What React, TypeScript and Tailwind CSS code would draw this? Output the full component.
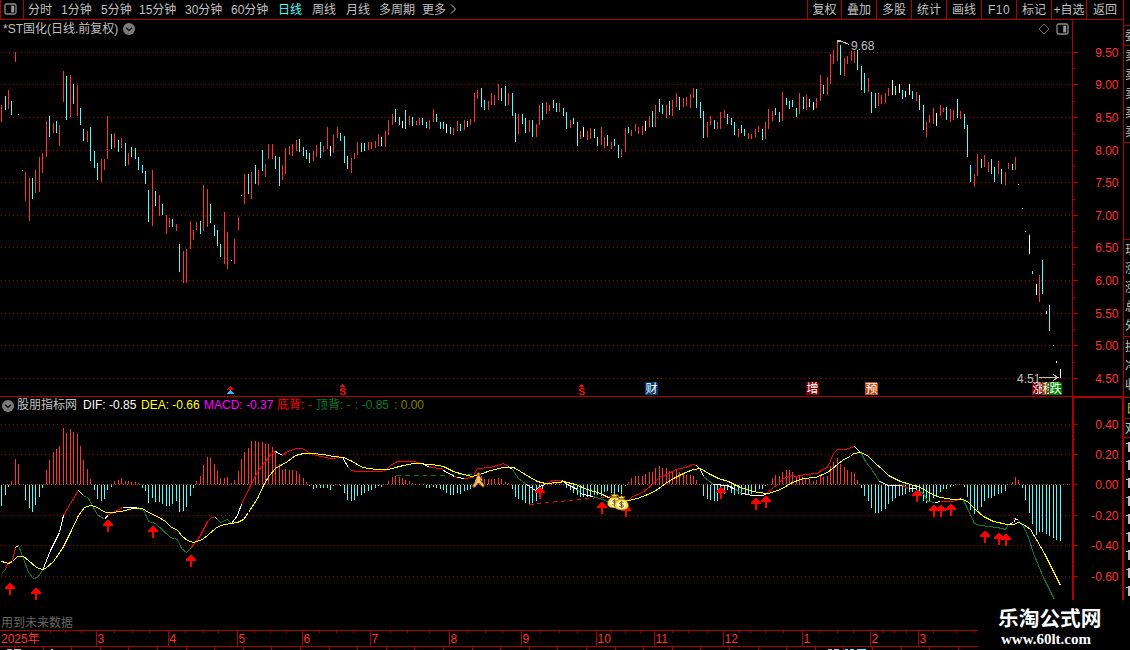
import { ReactNode } from "react";

type Bar = [x: number, top: number, bottom: number];
type Segment = [color: string, points: string];

const RED = "#ff3232";
const CYAN = "#54fcfc";
const WHITE = "#ffffff";
const GREEN = "#0a7a28";
const FRAME = "#b00000";

const periods = [
    { label: "分时", width: "w-[33px]" },
    { label: "1分钟", width: "w-[40px]" },
    { label: "5分钟", width: "w-[38px]" },
    { label: "15分钟", width: "w-[46px]" },
    { label: "30分钟", width: "w-[46px]" },
    { label: "60分钟", width: "w-[47px]" },
    { label: "日线", width: "w-[34px]", active: true },
    { label: "周线", width: "w-[34px]" },
    { label: "月线", width: "w-[33px]" },
    { label: "多周期", width: "w-[43px]" },
    { label: "更多", width: "w-[27px]" },
];

const tools = [
    { label: "复权", style: "w-[34px]" },
    { label: "叠加", style: "w-[35px]" },
    { label: "多股", style: "w-[35px]" },
    { label: "统计", style: "w-[35px]" },
    { label: "画线", style: "w-[35px]" },
    { label: "F10", style: "w-[35px] tracking-[0.5px]" },
    { label: "标记", style: "w-[35px]" },
    { label: "+自选", style: "w-[35px]" },
    { label: "返回", style: "w-[37px]" },
];

const upBars: Bar[] = [
    [1, 105, 122], [8, 90, 109], [15, 52, 62], [25, 172, 201], [29, 178, 221], [35, 170, 193], [39, 157, 192],
    [42, 153, 173], [46, 121, 157], [53, 123, 133], [59, 125, 146], [63, 71, 102], [70, 75, 117], [77, 85, 116],
    [87, 131, 142], [101, 159, 182], [104, 159, 170], [107, 116, 159], [114, 133, 148], [121, 138, 148],
    [128, 153, 165], [152, 170, 226], [159, 195, 216], [166, 215, 234], [169, 218, 227], [176, 224, 231],
    [183, 251, 283], [186, 249, 283], [190, 221, 249], [193, 230, 240], [196, 222, 230], [203, 185, 231],
    [207, 189, 227], [224, 212, 264], [227, 232, 269], [234, 239, 264], [238, 217, 230], [244, 174, 204],
    [251, 172, 199], [258, 170, 185], [265, 164, 177], [268, 144, 159], [272, 144, 159], [282, 165, 180],
    [285, 148, 174], [289, 146, 155], [292, 144, 156], [296, 140, 151], [313, 151, 161], [316, 145, 157],
    [323, 146, 152], [327, 127, 149], [333, 135, 153], [337, 127, 138], [351, 158, 173], [354, 153, 159],
    [357, 142, 155], [368, 142, 150], [371, 142, 149], [375, 141, 148], [378, 134, 146], [385, 131, 147],
    [388, 120, 135], [392, 114, 125], [409, 116, 125], [416, 121, 125], [419, 118, 125], [429, 120, 129],
    [433, 109, 122], [453, 128, 135], [457, 121, 131], [464, 120, 130], [470, 119, 125], [474, 93, 122],
    [477, 90, 99], [488, 101, 110], [491, 93, 105], [494, 95, 105], [498, 84, 100], [508, 93, 105],
    [518, 114, 134], [529, 120, 132], [536, 124, 137], [539, 105, 125], [546, 102, 114], [549, 105, 111],
    [559, 103, 112], [570, 120, 128], [580, 131, 139], [587, 131, 140], [590, 128, 139], [601, 127, 145],
    [604, 137, 148], [611, 142, 149], [621, 149, 157], [625, 128, 152], [631, 130, 136], [635, 124, 131],
    [638, 127, 134], [642, 126, 135], [649, 116, 127], [655, 105, 127], [666, 105, 118], [672, 100, 116],
    [676, 93, 107], [683, 98, 107], [686, 97, 106], [690, 94, 108], [693, 88, 98], [707, 122, 137],
    [710, 116, 125], [717, 122, 129], [720, 112, 129], [724, 110, 118], [738, 129, 137], [748, 133, 139],
    [751, 134, 139], [755, 129, 137], [758, 126, 132], [765, 122, 139], [768, 109, 129], [772, 111, 121],
    [782, 92, 121], [799, 93, 114], [806, 95, 110], [816, 98, 108], [820, 75, 101], [827, 77, 95],
    [830, 54, 84], [833, 50, 64], [837, 42, 61], [844, 58, 76], [847, 56, 64], [851, 51, 61], [854, 51, 63],
    [868, 78, 92], [878, 93, 106], [881, 95, 104], [885, 93, 103], [888, 88, 96], [916, 92, 101],
    [926, 122, 137], [929, 115, 123], [933, 108, 124], [940, 105, 116], [943, 108, 112], [950, 109, 122],
    [953, 110, 120], [960, 111, 119], [974, 174, 187], [977, 154, 176], [984, 155, 167], [988, 162, 172],
    [998, 161, 174], [1005, 172, 185], [1008, 163, 169], [1015, 157, 170], [1039, 275, 302],
];

const downBars: Bar[] = [
    [5, 96, 110], [11, 101, 115], [32, 178, 199], [49, 116, 137], [56, 121, 133], [66, 76, 120], [73, 84, 104],
    [80, 108, 125], [83, 129, 141], [90, 127, 161], [94, 151, 168], [97, 163, 180], [111, 134, 149],
    [118, 140, 152], [125, 143, 166], [131, 147, 157], [135, 148, 159], [138, 157, 170], [142, 165, 173],
    [145, 171, 184], [148, 190, 222], [155, 191, 206], [162, 204, 215], [172, 219, 227], [179, 244, 272],
    [200, 221, 234], [210, 204, 223], [214, 225, 236], [217, 230, 246], [220, 244, 257], [248, 174, 194],
    [255, 165, 184], [262, 150, 171], [275, 156, 169], [279, 157, 186], [299, 139, 152], [303, 147, 156],
    [306, 150, 159], [309, 153, 163], [320, 142, 158], [340, 133, 141], [344, 136, 163], [347, 156, 169],
    [361, 143, 152], [364, 143, 151], [381, 137, 146], [395, 109, 122], [399, 117, 125], [405, 110, 129],
    [412, 117, 126], [422, 118, 125], [426, 122, 128], [436, 114, 122], [440, 122, 129], [443, 122, 129],
    [450, 127, 134], [460, 124, 131], [467, 121, 127], [481, 88, 107], [484, 100, 110], [501, 88, 101],
    [505, 86, 106], [512, 93, 116], [515, 113, 142], [522, 114, 124], [525, 118, 133], [532, 120, 137],
    [542, 103, 120], [553, 100, 108], [556, 103, 112], [563, 108, 116], [566, 112, 129], [573, 118, 124],
    [577, 122, 146], [594, 129, 138], [597, 137, 146], [607, 135, 146], [614, 139, 146], [618, 145, 158],
    [628, 127, 133], [652, 111, 127], [659, 99, 112], [662, 105, 114], [669, 101, 115], [679, 97, 110],
    [696, 89, 108], [700, 102, 118], [703, 111, 138], [714, 120, 129], [727, 114, 124], [731, 118, 125],
    [734, 122, 135], [741, 125, 133], [744, 129, 136], [762, 129, 140], [775, 108, 115], [779, 112, 122],
    [786, 98, 105], [789, 101, 109], [792, 100, 107], [796, 108, 117], [803, 97, 109], [809, 99, 107],
    [823, 85, 94], [840, 45, 75], [857, 50, 70], [861, 66, 90], [864, 73, 93], [871, 92, 113], [875, 93, 108],
    [895, 86, 95], [902, 90, 99], [912, 91, 99], [919, 95, 110], [923, 105, 130], [946, 107, 120],
    [957, 99, 118], [964, 114, 129], [967, 125, 157], [970, 165, 182], [981, 159, 168], [991, 159, 174],
    [994, 167, 182], [1001, 169, 184], [1012, 164, 170], [1032, 271, 274], [1042, 260, 294], [1049, 305, 331],
];

const flatBars: Bar[] = [
    [18, 114, 115], [22, 170, 171], [231, 260, 261], [241, 195, 196], [330, 146, 156], [402, 121, 128],
    [446, 124, 133], [583, 127, 137], [645, 121, 131], [813, 102, 110], [892, 80, 95], [899, 84, 93],
    [905, 91, 97], [909, 84, 95], [936, 113, 126], [1018, 184, 185], [1022, 208, 209], [1025, 231, 232],
    [1029, 235, 254], [1036, 284, 295], [1046, 311, 314], [1053, 345, 346], [1056, 361, 363], [1060, 369, 378],
];

// [x, end of bar], the zero line sits at 484
const macd: [number, number][] = [
    [1, 506], [5, 495], [8, 487], [11, 481], [15, 459], [18, 464], [25, 500], [29, 508], [32, 512], [35, 505],
    [39, 497], [42, 488], [46, 470], [49, 460], [53, 452], [56, 449], [59, 446], [63, 428], [66, 433], [70, 429],
    [73, 432], [77, 434], [80, 446], [83, 460], [87, 469], [90, 479], [94, 490], [97, 499], [101, 501],
    [104, 499], [107, 490], [111, 487], [114, 481], [118, 480], [121, 478], [125, 481], [128, 481], [131, 482],
    [135, 482], [138, 483], [142, 488], [145, 491], [148, 503], [152, 498], [155, 502], [159, 502], [162, 504],
    [166, 506], [169, 506], [172, 504], [176, 501], [179, 512], [183, 511], [186, 507], [190, 496], [193, 488],
    [196, 481], [200, 476], [203, 465], [207, 457], [210, 458], [214, 464], [217, 471], [220, 478], [224, 478],
    [227, 477], [231, 483], [234, 480], [238, 471], [241, 459], [244, 452], [248, 448], [251, 441], [255, 441],
    [258, 442], [262, 442], [265, 444], [268, 444], [272, 447], [275, 453], [279, 464], [282, 470], [285, 469],
    [289, 470], [292, 470], [296, 471], [299, 474], [303, 478], [306, 482], [309, 486], [313, 489], [316, 488],
    [320, 488], [323, 488], [327, 488], [330, 490], [333, 486], [340, 486], [344, 493], [347, 500], [351, 501],
    [354, 500], [357, 496], [361, 495], [364, 493], [368, 491], [371, 490], [375, 488], [378, 486], [381, 487],
    [388, 481], [392, 477], [395, 476], [399, 477], [402, 478], [405, 480], [409, 481], [412, 483], [426, 488],
    [429, 488], [433, 487], [436, 488], [440, 489], [443, 490], [446, 493], [450, 495], [453, 495], [457, 493],
    [460, 494], [464, 491], [467, 490], [470, 489], [481, 476], [484, 479], [488, 479], [491, 479], [494, 479],
    [498, 478], [501, 479], [505, 482], [508, 483], [512, 489], [515, 497], [518, 499], [522, 500], [525, 503],
    [529, 504], [532, 503], [536, 501], [539, 498], [542, 490], [546, 483], [549, 483], [553, 483], [556, 483],
    [566, 488], [570, 490], [573, 493], [577, 495], [580, 497], [583, 497], [587, 497], [590, 496], [594, 495],
    [597, 495], [601, 496], [604, 492], [607, 491], [611, 493], [614, 494], [618, 492], [621, 494], [625, 486],
    [628, 482], [631, 478], [635, 476], [638, 476], [642, 476], [645, 474], [649, 472], [652, 472], [655, 468],
    [659, 466], [662, 468], [666, 468], [669, 471], [672, 471], [676, 470], [679, 472], [683, 473], [686, 475],
    [690, 475], [693, 476], [696, 480], [703, 496], [707, 499], [710, 500], [714, 501], [717, 501], [720, 495],
    [724, 494], [727, 490], [731, 493], [734, 495], [738, 494], [741, 495], [745, 495], [748, 494], [751, 494],
    [755, 492], [759, 489], [762, 489], [765, 486], [772, 478], [775, 475], [779, 476], [782, 472], [786, 470],
    [789, 470], [792, 472], [796, 476], [799, 475], [802, 477], [805, 479], [809, 479], [813, 481], [816, 480],
    [820, 476], [823, 477], [827, 476], [830, 466], [833, 462], [837, 458], [840, 464], [844, 467], [847, 470],
    [851, 472], [854, 473], [857, 480], [861, 488], [864, 496], [868, 501], [871, 508], [875, 513], [878, 513],
    [881, 511], [885, 509], [888, 504], [892, 501], [895, 498], [899, 496], [902, 495], [905, 494], [909, 492],
    [912, 492], [916, 489], [919, 491], [923, 501], [926, 503], [929, 502], [933, 498], [936, 497], [940, 492],
    [943, 489], [946, 489], [950, 487], [953, 486], [964, 487], [967, 497], [970, 510], [974, 514], [977, 510],
    [981, 507], [984, 501], [988, 498], [991, 498], [994, 496], [998, 494], [1001, 493], [1005, 491], [1012, 482],
    [1015, 477], [1018, 480], [1022, 488], [1025, 500], [1029, 513], [1032, 524], [1036, 535], [1039, 532],
    [1042, 532], [1046, 534], [1049, 536], [1053, 538], [1056, 540], [1060, 541],
];

const dea =
    "1,561 5,562 8,563 12,561 17,556 23,556 28,560 36,567 42,569 45,568 53,561 62,548 71,530 78,515 84,507 90,505 95,506 100,509 105,512 112,512 120,511 133,508 142,508 148,512 157,516 165,521 170,526 177,530 182,536 187,540 193,542 202,539 208,534 215,528 220,525 230,523 237,522 243,519 248,512 257,498 263,485 269,475 275,468 282,464 287,461 295,455 303,453 312,453 323,454 333,456 343,457 352,461 360,466 367,468 377,469 388,469 395,467 403,465 413,463 432,464 443,466 453,471 463,474 472,476 482,473 490,470 503,467 513,467 520,471 528,476 537,481 545,483 559,482 563,481 575,484 587,489 600,493 608,497 620,501 628,500 637,498 650,493 657,489 665,483 675,477 685,472 693,469 700,468 708,473 718,478 728,481 740,487 750,490 757,492 768,493 780,489 792,482 803,478 815,477 827,472 837,464 843,459 850,456 853,453 860,452 867,455 875,463 882,469 888,475 900,481 910,484 920,487 930,493 940,497 953,499 963,499 968,502 975,509 983,516 993,521 1007,524 1013,524 1018,522 1023,524 1030,529 1036,539 1045,555 1053,571 1060,585";

const dif: Segment[] = [
    [GREEN, "1,573 5,569"],
    ["#ff0000", "5,569 7,563 12,560 15,547"],
    [WHITE, "15,547 18,545"],
    [GREEN, "18,545 23,558 28,572 33,578 37,577 42,570"],
    [WHITE, "42,570 50,550 59,532 63,515"],
    ["#ff0000", "63,515 70,503 78,490"],
    [WHITE, "78,490 83,495"],
    [GREEN, "83,495 88,498 93,507 97,514 104,519"],
    [WHITE, "104,519 108,514"],
    ["#ff0000", "108,514 115,511 122,507"],
    [WHITE, "122,507 137,507"],
    [GREEN, "137,507 144,511 148,521 155,523 170,537 177,539 181,548 186,552 190,548"],
    ["#ff0000", "190,548 195,542 200,535 207,521 211,517 215,517"],
    [WHITE, "215,517 217,519"],
    [GREEN, "217,519 220,522 227,519 231,523"],
    [WHITE, "231,523 237,515 241,504"],
    ["#ff0000", "241,504 250,485 258,470 271,453 275,451"],
    [WHITE, "275,451 282,455"],
    ["#ff0000", "282,455 287,451 296,448 302,448 312,454 330,458 342,457"],
    [WHITE, "342,457 348,467"],
    [GREEN, "348,467 351,470"],
    ["#ff0000", "351,470 357,471 380,471 385,470 390,465 397,461 413,461 422,463"],
    [WHITE, "422,463 429,467"],
    ["#ff0000", "429,467 441,468 443,470"],
    [WHITE, "443,470 454,476"],
    ["#ff0000", "454,476 457,477"],
    [WHITE, "457,477 464,478"],
    ["#ff0000", "464,478 472,477 477,468 490,467 503,463 508,466"],
    [WHITE, "508,466 512,469"],
    [GREEN, "512,469 518,478 526,484"],
    [WHITE, "526,484 535,490 539,486 545,484"],
    ["#ff0000", "545,484 552,480 562,480"],
    [WHITE, "562,480 565,483 577,489"],
    [GREEN, "577,489 580,493"],
    [WHITE, "580,493 587,495 593,496"],
    [GREEN, "593,496 602,499 612,503 620,504"],
    ["#ff0000", "620,504 627,501 632,496 642,492 652,484 660,476 667,474 675,469 685,467 693,464 696,465"],
    [WHITE, "696,465 700,469 703,476"],
    [GREEN, "703,476 713,484"],
    [WHITE, "713,484 727,485 735,489"],
    [GREEN, "735,489 742,493"],
    [WHITE, "742,493 752,495 763,495 766,493"],
    ["#ff0000", "766,493 772,488 778,483 783,478 792,475 795,476 805,474 817,473 822,469 827,467 833,453 837,449 845,449 854,446"],
    [WHITE, "854,446 861,453"],
    [GREEN, "861,453 865,461 870,467 877,478 879,481"],
    [WHITE, "879,481 888,485 902,485"],
    ["#ff0000", "902,485 908,488"],
    [WHITE, "908,488 915,488 917,490"],
    [GREEN, "917,490 923,493 927,501 935,502"],
    [WHITE, "935,502 940,501"],
    ["#ff0000", "940,501 952,501 960,498"],
    [WHITE, "960,498 963,500"],
    [GREEN, "963,500 967,508 974,523 980,525 997,527 1005,529 1008,524"],
    [WHITE, "1008,524 1013,522 1015,519"],
    ["#ff0000", "1012,518 1015,518"],
    [WHITE, "1015,518 1018,520"],
    [GREEN, "1018,520 1023,526 1028,537 1033,553 1043,577 1054,599"],
];

const arrows: [number, number][] = [
    [10, 583], [36, 588], [108, 520], [153, 526], [191, 555], [540, 487], [602, 502], [626, 505], [721, 487],
    [756, 498], [766, 496], [917, 490], [934, 505], [941, 505], [951, 504], [985, 531], [999, 533], [1006, 534],
];

const priceScale: [number, string][] = [
    [52, "9.50"], [84, "9.00"], [117, "8.50"], [150, "8.00"], [182, "7.50"], [215, "7.00"],
    [247, "6.50"], [280, "6.00"], [313, "5.50"], [345, "5.00"], [378, "4.50"],
];

const macdScale: [number, string][] = [
    [424, "0.40"], [454, "0.20"], [484, "0.00"], [515, "-0.20"], [545, "-0.40"], [576, "-0.60"],
];

const badges = [
    { x: 645, label: "财", fill: "#003a70" },
    { x: 806, label: "增", fill: "#800000" },
    { x: 865, label: "预", fill: "#c04a10" },
    { x: 1032, label: "涨", fill: "#800000" },
    { x: 1042, label: "移", fill: "#804000" },
    { x: 1049, label: "跌", fill: "#008000" },
];

const months: [number, string][] = [
    [96, "3"], [168, "4"], [237, "5"], [302, "6"], [370, "7"], [449, "8"], [521, "9"],
    [596, "10"], [654, "11"], [723, "12"], [802, "1"], [870, "2"], [918, "3"],
];

const weekTicks = [
    50, 65, 81, 114, 132, 149, 185, 203, 218, 254, 270, 286, 319, 336, 353, 390, 407, 429, 467, 485, 502, 540, 559,
    577, 611, 625, 640, 672, 688, 707, 739, 750, 765, 783, 819, 837, 853, 883, 894, 906, 933, 956, 974,
];

function PanelIcon() {
    return (
        <svg width="13" height="12" viewBox="0 0 13 12" fill="none">
            <rect x="1" y="1" width="11" height="10" rx="1.5" stroke="#8a8a8a" strokeWidth="1.3" />
            <rect x="7.2" y="2.6" width="3" height="6.8" fill="#9a9a9a" />
        </svg>
    );
}

function ToggleIcon() {
    return (
        <svg width="12" height="12" viewBox="0 0 12 12" fill="none">
            <circle cx="6" cy="6" r="6" fill="#7c7c7c" />
            <path d="M3 4.7 6 7.5 9 4.7" stroke="#151515" strokeWidth="1.5" />
        </svg>
    );
}

function Bars({ data, color }: { data: Bar[]; color: string }) {
    return (
        <g fill={color}>
            {data.map(([x, top, bottom]) => (
                <rect key={x} x={x} y={top} width="1" height={bottom - top} />
            ))}
        </g>
    );
}

function GridLine({ y, from = 1, color = "#b00000" }: { y: number; from?: number; color?: string }) {
    return <line x1={from} x2="1071" y1={y + 0.5} y2={y + 0.5} stroke={color} strokeDasharray="1 3" />;
}

function Scale({ marks }: { marks: [number, string][] }) {
    return (
        <g fill={FRAME}>
            {marks.map(([y, label], i) => (
                <g key={label}>
                    <rect x="1073" y={y} width="5" height="1" />
                    {i < marks.length - 1 && <rect x="1073" y={Math.round((y + marks[i + 1][0]) / 2)} width="2" height="1" />}
                    <text x="1118.5" y={y + 5} textAnchor="end" fill={RED}>{label}</text>
                </g>
            ))}
        </g>
    );
}

function Dividend({ x }: { x: number }) {
    return (
        <g transform={`translate(${x} 384)`} fill="#ff0000">
            <path d="M2 0h1v1h1v1h1v1H0V2h1V1h1z" />
            <path d="M1 4h4v1h1v1H4V5H2v1h1v1h2v1h1v2H5v1H1v-1H0V9h2v1h2V8H2V7H0V5h1z" />
        </g>
    );
}

function MoneyBag({ x, y }: { x: number; y: number }) {
    return (
        <g transform={`translate(${x} ${y})`} shapeRendering="auto">
            <path d="M3 1 5 2 6.500 .5 8 2 10 1 8.800 4C11.500 5 13.500 8 13.500 10.500c0 3-3 4.500-7 4.500S-.5 13.500-.5 10.500c0-2.500 2-5.500 4.700-6.500z" fill="#f4e040" stroke="#8a5020" strokeWidth=".6" />
            <ellipse cx="6.500" cy="9.800" rx="4.600" ry="4.100" fill="#fffab8" />
            <path d="M4 4h5" stroke="#5a3010" />
            <path d="M8.600 7.800c-1-1-4-1-4 .4 0 1.700 4 1 4 2.800 0 1.500-3.200 1.400-4.300.4M6.500 6.300v7" stroke="#8a4c20" strokeWidth="1" fill="none" />
        </g>
    );
}

function Runner() {
    return (
        <g shapeRendering="auto" stroke="#fcc060" strokeLinecap="round" fill="none">
            <path d="m478 481-4 5M479 481l4 4.500M478.500 477v4" stroke="#70401c" strokeWidth="4" />
            <circle cx="478.500" cy="474.300" r="1.700" fill="#e8a048" stroke="#704018" strokeWidth=".7" />
            <path d="M478.500 477.500v4" strokeWidth="3.400" />
            <path d="m478 481-3.700 4.700M479 481l3.800 4.300" strokeWidth="2.200" />
            <path d="m477.500 478-2 3M479.500 478l2.500 2" strokeWidth="1.300" />
        </g>
    );
}

function TopBar() {
    return (
        <header className="flex h-5 shrink-0 border-b border-[#b00000] leading-5">
            <div className="flex w-6 items-center border-x border-[#b00000] pb-0.5 pl-[3px]">
                <PanelIcon />
            </div>
            <nav className="flex flex-1 pl-1">
                {periods.map((p) => (
                    <span key={p.label} className={`${p.width} shrink-0 ${p.active ? "text-[#54fcfc]" : ""}`}>
                        {p.label}
                    </span>
                ))}
                <svg className="mt-1" width="8" height="10" viewBox="0 0 8 10" fill="none" stroke="#c0c0c0">
                    <path d="m2 .500 4.500 4.500L2 9.500" />
                </svg>
            </nav>
            <div className="flex shrink-0">
                {tools.map((t) => (
                    <span key={t.label} className={`${t.style} whitespace-nowrap border-l border-[#b00000] text-center`}>
                        {t.label}
                    </span>
                ))}
            </div>
        </header>
    );
}

function PricePanel() {
    return (
        <section className="flex h-[377px] shrink-0 flex-col border-b border-[#b00000]">
            <div className="flex h-[18px] items-center justify-between pl-[3px] pr-[54px]">
                <div className="flex items-center gap-[5px]">
                    <span className="leading-5">*ST国化(日线.前复权)</span>
                    <ToggleIcon />
                </div>
                <div className="flex items-center gap-[6px]">
                    <svg width="12" height="12" viewBox="0 0 12 12" fill="none" stroke="#707070">
                        <path d="m6 1 5 5-5 5-5-5z" />
                    </svg>
                    <PanelIcon />
                </div>
            </div>
            <svg className="overflow-visible" width="1123" height="358" viewBox="0 38 1123 358" shapeRendering="crispEdges">
                {priceScale.map(([y]) => <GridLine key={y} y={y} />)}
                <Bars data={upBars} color={RED} />
                <Bars data={downBars} color={CYAN} />
                <Bars data={flatBars} color={WHITE} />
                <rect x="1072" y="20" width="1" height="376" fill={FRAME} />
                <Scale marks={priceScale} />

                <g fill="none" stroke="#c0c0c0">
                    <path d="M837.500 43v-3h3M838 41h3l8 3.500" />
                    <path d="M1039 377.500h19M1053 374.500l5 3-5 3" />
                </g>
                <g fill="#c0c0c0">
                    <text x="851" y="50">9.68</text>
                    <text x="1017" y="383">4.51</text>
                </g>

                <path d="M230 386h1v1h1v1h1v1h1v1h-7v-1h1v-1h1v-1h1z" fill="#e00000" />
                <path d="M230 390h1v1h1v1h1v1h1v1h-7v-1h1v-1h1v-1h1z" fill="#30b8f8" />
                <Dividend x={340} />
                <Dividend x={579} />
                {badges.map((b) => (
                    <g key={b.label}>
                        <path d={`M${b.x} 382h11l2 2v11h-13z`} fill={b.fill} />
                        <text x={b.x + 0.5} y="393" fill="#fff">{b.label}</text>
                    </g>
                ))}
            </svg>
        </section>
    );
}

function MacdPanel() {
    return (
        <section className="flex h-[233px] shrink-0 flex-col">
            <div className="flex h-[17px] items-center whitespace-nowrap pl-[2px] leading-[17px]">
                <ToggleIcon />
                <span className="ml-[3px] w-[66px]">股朋指标网</span>
                <span className="w-[58px] text-white">DIF: -0.85</span>
                <span className="w-[63px] text-[#ffff00]">DEA: -0.66</span>
                <span className="w-[73px] text-[#ff00ff]">MACD: -0.37</span>
                <span className="w-[39px] text-[#ff0000]">底背: -</span>
                <span className="w-[39px] text-[#0a7a28]">顶背: -</span>
                <span className="w-[39px] text-[#0a7a28]">: -0.85</span>
                <span className="text-[#808000]">: 0.00</span>
            </div>
            <svg className="overflow-visible" width="1123" height="216" viewBox="0 414 1123 216" shapeRendering="crispEdges">
                {macdScale.map(([y]) => <GridLine key={y} y={y} />)}
                <GridLine y={484} from={3} color="#808000" />
                {macd.map(([x, end]) =>
                    end < 484 ? (
                        <rect key={x} x={x} y={end} width="1" height={484 - end} fill={RED} />
                    ) : (
                        <rect key={x} x={x} y="485" width="1" height={end - 485} fill={CYAN} />
                    )
                )}
                <g fill="none" transform="translate(.5 .5)">
                    <path d="m395 475 30 0 50-1" stroke={GREEN} strokeDasharray="5 4" />
                    <path d="m529 504 70-7 20-2" stroke="#ff0000" strokeDasharray="4 4" />
                    {dif.map(([color, points]) => <polyline key={points} points={points} stroke={color} />)}
                    <polyline points={dea} stroke="#ffff00" />
                </g>
                {arrows.map(([x, y]) => (
                    <path
                        key={x}
                        d={`M${x - 1} ${y}h2v1h1v1h1v1h1v1h1v2h-4v6h-2v-6h-4v-2h1v-1h1v-1h1v-1h1z`}
                        fill="#ff0000"
                    />
                ))}
                <Runner />
                <MoneyBag x={608} y={493} />
                <MoneyBag x={615} y={495} />
                <path d="M1072 396h52v204h-2V398h-48v202h-2z" fill={FRAME} />
                <Scale marks={macdScale} />
                <text x="1" y="627" fill="#666">用到未来数据</text>
            </svg>
        </section>
    );
}

function TimeAxis() {
    return (
        <svg width="978" height="20" viewBox="0 630 978 20" shapeRendering="crispEdges" fill={FRAME}>
            <rect x="0" y="630" width="978" height="1" />
            <rect x="0" y="646" width="978" height="1" />
            {weekTicks.map((x) => <rect key={x} x={x} y="631" width="1" height="2" />)}
            {Array.from({ length: 34 }, (_, i) => (
                <rect key={i} x={Math.round(14 + i * 28.6)} y="647" width="1" height="3" />
            ))}
            <text x="1" y="643" fill={RED}>2025年</text>
            {months.map(([x, label]) => (
                <g key={x}>
                    <rect x={x} y="630" width="1" height="16" />
                    <text x={x + 1.5} y="643" fill={RED}>{label}</text>
                </g>
            ))}
            <path d="M7 649h5v1H7zM14 649h7v1h-7zM51 649h2v1h-2zM828 649h4v1h-4zM834 649h5v1h-5z" fill="#c0c0c0" />
            <path d="M845 649h3v1h-3zM850 649h4v1h-4zM857 649h9v1h-9z" fill={CYAN} />
        </svg>
    );
}

function QuoteStrip() {
    const row = (label: string, y: number): ReactNode => (
        <text key={y} x="2" y={y}>{label}</text>
    );
    return (
        <aside className="h-[650px] w-[7px] shrink-0 overflow-hidden">
            <svg width="7" height="650" viewBox="0 0 7 650" shapeRendering="crispEdges" fill="#c0c0c0">
                <rect x="0" y="0" width="1" height="600" fill={FRAME} />
                {[25, 45, 142, 239, 336, 397, 418, 437].map((y) => (
                    <rect key={y} x="0" y={y} width="7" height="1" fill={FRAME} />
                ))}
                {row("委", 40)}
                {[60, 79, 98, 117, 136].map((y) => row("卖", y))}
                {["现", "涨", "涨", "总", "外"].map((t, i) => row(t, 254 + i * 19))}
                {["换", "净", "收"].map((t, i) => row(t, 351 + i * 19))}
                <text x="3" y="413" fill="#d0d000">日</text>
                {row("双", 433)}
                {Array.from({ length: 9 }, (_, i) => (
                    <path key={i} d={`M5 ${442 + i * 18}h2v10h-2v-8h-2v-1h2z`} />
                ))}
                <rect x="0" y="396" width="1" height="204" fill={FRAME} />
            </svg>
        </aside>
    );
}

export default function App() {
    return (
        <div className="relative flex h-[650px] w-[1130px] overflow-hidden bg-black font-['Liberation_Sans','Noto_Sans_CJK_SC',sans-serif] text-[12px] text-[#c0c0c0]">
            <main className="flex w-[1123px] shrink-0 flex-col">
                <TopBar />
                <PricePanel />
                <MacdPanel />
                <TimeAxis />
            </main>
            <QuoteStrip />

            {/* site mark over the bottom right corner */}
            <div className="absolute bottom-0 right-0 flex h-[50px] w-[152px] flex-col bg-black pl-5 text-white">
                <span className="mt-[7px] whitespace-nowrap text-[20.7px] font-bold leading-6">乐淘公式网</span>
                <span className="ml-[3px] font-['Liberation_Serif',serif] text-[15px] font-bold leading-4">www.60lt.com</span>
            </div>
        </div>
    );
}
